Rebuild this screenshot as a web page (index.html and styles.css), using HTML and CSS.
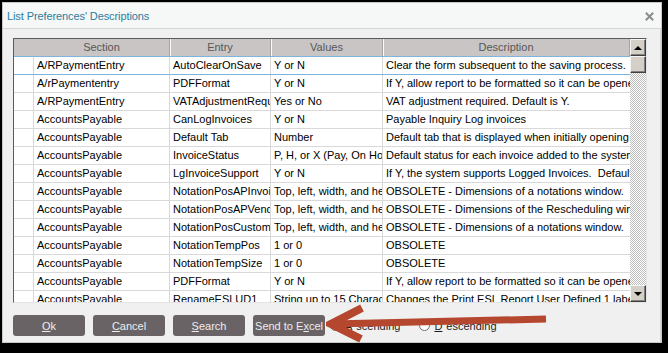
FILE: index.html
```html
<!DOCTYPE html>
<html lang="en">
<head>
  <meta charset="UTF-8">
  <title>List Preferences' Descriptions</title>
  <link rel="stylesheet" href="styles.css">
</head>
<body>
  <div class="window">
    <div class="titlebar">
      <span class="title">List Preferences' Descriptions</span>
      <svg class="close" viewBox="0 0 12 12"><path d="M2 2L10 10M10 2L2 10"/></svg>
    </div>

    <div class="client">
      <div class="listview">
        <div class="grid">
          <div class="row head">
            <div class="c ind"></div>
            <div class="c">Section</div>
            <div class="c">Entry</div>
            <div class="c">Values</div>
            <div class="c">Description</div>
          </div>
          <div class="row sel">
            <div class="c ind"></div>
            <div class="c">A/RPaymentEntry</div>
            <div class="c">AutoClearOnSave</div>
            <div class="c">Y or N</div>
            <div class="c">Clear the form subsequent to the saving process.&nbsp; Default is Y.</div>
          </div>
          <div class="row">
            <div class="c ind"></div>
            <div class="c">A/rPaymententry</div>
            <div class="c">PDFFormat</div>
            <div class="c">Y or N</div>
            <div class="c">If Y, allow report to be formatted so it can be opened in Adobe.</div>
          </div>
          <div class="row">
            <div class="c ind"></div>
            <div class="c">A/RPaymentEntry</div>
            <div class="c">VATAdjustmentRequired</div>
            <div class="c">Yes or No</div>
            <div class="c">VAT adjustment required. Default is Y.</div>
          </div>
          <div class="row">
            <div class="c ind"></div>
            <div class="c">AccountsPayable</div>
            <div class="c">CanLogInvoices</div>
            <div class="c">Y or N</div>
            <div class="c">Payable Inquiry Log invoices</div>
          </div>
          <div class="row">
            <div class="c ind"></div>
            <div class="c">AccountsPayable</div>
            <div class="c">Default Tab</div>
            <div class="c">Number</div>
            <div class="c">Default tab that is displayed when initially opening the form.</div>
          </div>
          <div class="row">
            <div class="c ind"></div>
            <div class="c">AccountsPayable</div>
            <div class="c">InvoiceStatus</div>
            <div class="c">P, H, or X (Pay, On Hold, Cancel)</div>
            <div class="c">Default status for each invoice added to the system</div>
          </div>
          <div class="row">
            <div class="c ind"></div>
            <div class="c">AccountsPayable</div>
            <div class="c">LgInvoiceSupport</div>
            <div class="c">Y or N</div>
            <div class="c">If Y, the system supports Logged Invoices.&nbsp; Default is N.</div>
          </div>
          <div class="row">
            <div class="c ind"></div>
            <div class="c">AccountsPayable</div>
            <div class="c">NotationPosAPInvoice</div>
            <div class="c">Top, left, width, and height</div>
            <div class="c">OBSOLETE - Dimensions of a notations window.</div>
          </div>
          <div class="row">
            <div class="c ind"></div>
            <div class="c">AccountsPayable</div>
            <div class="c">NotationPosAPVendor</div>
            <div class="c">Top, left, width, and height</div>
            <div class="c">OBSOLETE - Dimensions of the Rescheduling window.</div>
          </div>
          <div class="row">
            <div class="c ind"></div>
            <div class="c">AccountsPayable</div>
            <div class="c">NotationPosCustomer</div>
            <div class="c">Top, left, width, and height</div>
            <div class="c">OBSOLETE - Dimensions of a notations window.</div>
          </div>
          <div class="row">
            <div class="c ind"></div>
            <div class="c">AccountsPayable</div>
            <div class="c">NotationTempPos</div>
            <div class="c">1 or 0</div>
            <div class="c">OBSOLETE</div>
          </div>
          <div class="row">
            <div class="c ind"></div>
            <div class="c">AccountsPayable</div>
            <div class="c">NotationTempSize</div>
            <div class="c">1 or 0</div>
            <div class="c">OBSOLETE</div>
          </div>
          <div class="row">
            <div class="c ind"></div>
            <div class="c">AccountsPayable</div>
            <div class="c">PDFFormat</div>
            <div class="c">Y or N</div>
            <div class="c">If Y, allow report to be formatted so it can be opened in Adobe.</div>
          </div>
          <div class="row">
            <div class="c ind"></div>
            <div class="c">AccountsPayable</div>
            <div class="c">RenameESLUD1</div>
            <div class="c">String up to 15 Characters</div>
            <div class="c">Changes the Print ESL Report User Defined 1 label</div>
          </div>
        </div>

        <div class="vscroll">
          <div class="sbtn up"><span></span></div>
          <div class="sbtn thumb"></div>
          <div class="track"></div>
          <div class="sbtn down"><span></span></div>
        </div>
      </div>

      <div class="actions">
        <button class="btn"><u>O</u>k</button>
        <button class="btn"><u>C</u>ancel</button>
        <button class="btn"><u>S</u>earch</button>
        <button class="btn">Send to E<u>x</u>cel</button>
        <label class="radio"><span class="dot on"></span><u>A</u>scending</label>
        <label class="radio"><span class="dot"></span><u>D</u>escending</label>
      </div>

      <!-- red arrow drawn over the dialog -->
      <svg class="arrow" viewBox="0 0 224 42">
        <path class="shaft" d="M6 22 L220 17"/>
        <path class="head" d="M36 6 L5 22 L35 37"/>
      </svg>
    </div>
  </div>
</body>
</html>
```

FILE: styles.css
```css
html, body {
  margin: 0;
  padding: 0;
  width: 668px;
  height: 353px;
  overflow: hidden;
  background-color: #000;
  font-family: 'Liberation Sans', Arial, sans-serif;
}

.window {
  margin: 2px 0 0 2px;
  width: 660px;
  height: 341px;
  box-sizing: border-box;
  border: 1px solid #c9c9c9;
  background-color: #f0f0f0;
  display: flex;
  flex-direction: column;
}

.titlebar {
  height: 25px;
  flex: none;
  display: flex;
  align-items: center;
  justify-content: space-between;
  padding: 0 6px 0 4px;
  background-color: #f6f7f7;
}

.title {
  font-size: 11px;
  color: #2b7d9f;
  letter-spacing: -0.1px;
}

.close {
  width: 11px;
  height: 11px;
  margin-top: 2px;
  fill: none;
  stroke: #8c8c8c;
  stroke-width: 2.2;
}

.client {
  flex: 1;
  position: relative;
  border-top: 1px solid #d6d6d6;
  border-right: 1px solid #d6d6d6;
  padding: 9px 0 0 10px;
}

/* list view */
.listview {
  width: 634px;
  height: 265px;
  box-sizing: border-box;
  border: 1px solid;
  border-color: #5b5b5b #e4e4e4 #e4e4e4 #5b5b5b;
  display: flex;
  background-color: #fff;
}

.grid {
  width: 616px;
  overflow: hidden;
}

.row {
  display: grid;
  grid-template-columns: 20px 136px 101px 112px 247px;
  height: 18px;
  box-sizing: border-box;
  border-bottom: 1px solid #d9d9d9;
  font-size: 11px;
  color: #000;
}

.c {
  padding-left: 3px;
  line-height: 17px;
  white-space: nowrap;
  overflow: hidden;
  border-right: 1px solid #d9d9d9;
}

.row .c:last-child {
  border-right: none;
}

.row.head {
  background-color: #c9c5c5;
  border-bottom: 1px solid #7fb5dc;
}

.row.head .c {
  padding-left: 0;
  text-align: center;
  color: #575757;
  border-right: 1px solid #a7a3a3;
  box-shadow: inset 1px 0 #fbfbfb;
}

.row.head .c.ind {
  border-right: none;
  box-shadow: none;
}

.row.head .c:nth-child(2) {
  box-shadow: none;
}

.row.sel {
  border-bottom-color: #7fb5dc;
}

/* scroll bar */
.vscroll {
  width: 16px;
  display: flex;
  flex-direction: column;
}

.sbtn {
  height: 17px;
  box-sizing: border-box;
  background-color: #d4d0c8;
  border: 1px solid;
  border-color: #f4f4f4 #404040 #404040 #f4f4f4;
  box-shadow: inset -1px -1px #808080;
  display: flex;
  align-items: center;
  justify-content: center;
}

.sbtn span {
  width: 0;
  height: 0;
  border-left: 4px solid transparent;
  border-right: 4px solid transparent;
}

.up span {
  border-bottom: 4px solid #000;
}

.down span {
  border-top: 4px solid #000;
}

.track {
  flex: 1;
  background: repeating-conic-gradient(#bdbdbd 0 25%, #fff 0 50%) 0 0 / 2px 2px;
}

/* bottom row */
.actions {
  display: flex;
  align-items: center;
  gap: 8px;
  margin-top: 12px;
}

.btn {
  width: 72px;
  height: 21px;
  padding: 0;
  border: none;
  border-radius: 3px;
  background-color: #6a6365;
  color: #ededed;
  font-family: 'Liberation Sans', Arial, sans-serif;
  font-size: 11px;
}

.radio {
  display: flex;
  align-items: center;
  gap: 4px;
  font-size: 11px;
  color: #1c1c1c;
}

.radio:first-of-type {
  margin-left: -3px;
  margin-right: 11px;
}

.dot {
  width: 11px;
  height: 11px;
  box-sizing: border-box;
  border-radius: 50%;
  border: 1px solid #6f6f6f;
  background-color: #fff;
  position: relative;
}

.dot.on::after {
  content: "";
  position: absolute;
  left: 3px;
  top: 3px;
  width: 3px;
  height: 3px;
  border-radius: 50%;
  background-color: #222;
}

.arrow {
  position: absolute;
  left: 323px;
  top: 273px;
  width: 224px;
  height: 42px;
  fill: none;
  stroke: #b6472f;
}

.arrow .shaft {
  stroke-width: 7;
}

.arrow .head {
  stroke-width: 8;
  stroke-linejoin: miter;
}
```
